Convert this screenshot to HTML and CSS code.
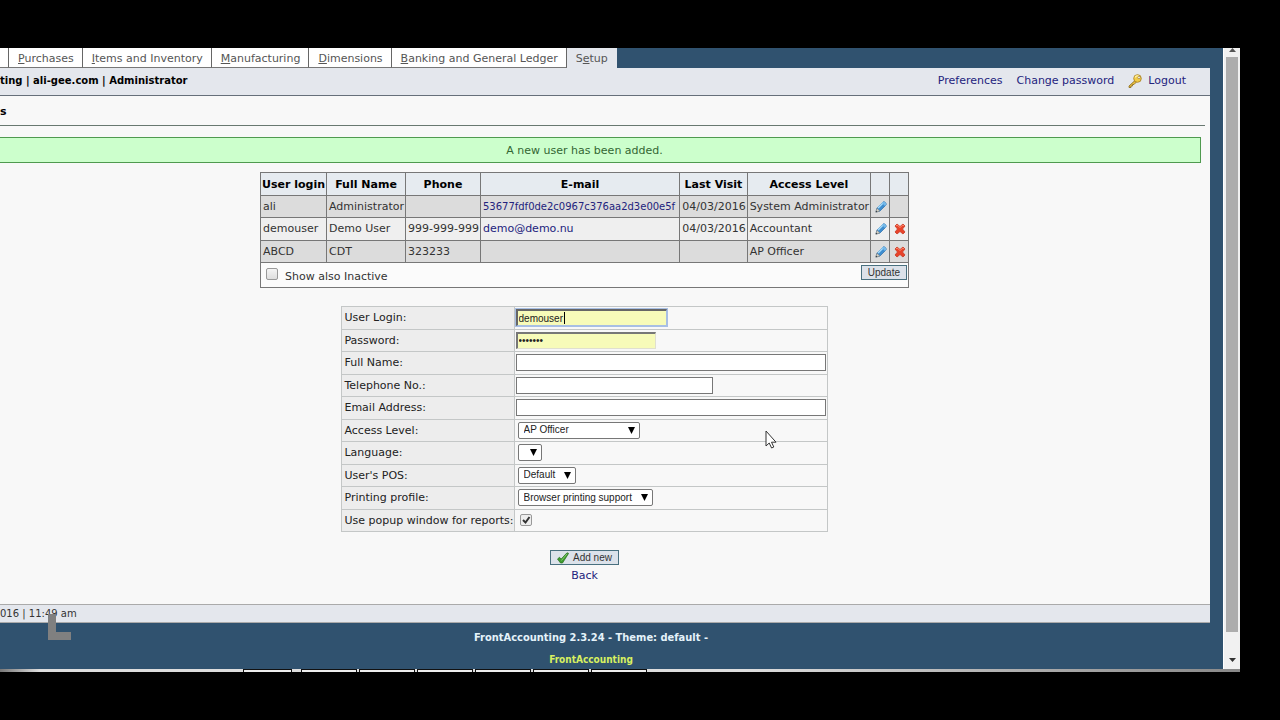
FILE: index.html
```
<!DOCTYPE html>
<html lang="en">
<head>
    <meta charset="UTF-8" />
    <meta name="viewport" content="width=device-width, initial-scale=1.0" />
    <title>FrontAccounting - Users</title>
    <link rel="stylesheet" href="styles.css">
</head>
<body>
    <!-- shared icons -->
    <svg class="defs" aria-hidden="true">
        <symbol id="pencil" viewBox="0 0 12 12">
            <path d="M1 11l1-4 6-6c1-1 4 1 3 3l-6 6z" fill="#3f8ed0" stroke="#2e6da8" stroke-width=".7"/>
            <path d="M3 7l5.500-5.500" stroke="#a9dcfa" stroke-width="1.600"/>
            <path d="M.8 11.200l1.100-4 2.900 2.800z" fill="#d9d3c4" stroke="#777" stroke-width=".5"/>
            <path d="M.7 11.300l.5-1.600 1.200 1.100z" fill="#333"/>
            <path d="M8 1c1-1 4 1 3 3l-1 1-3-3z" fill="#74b9ea"/>
        </symbol>
        <symbol id="cross" viewBox="0 0 12 12">
            <path d="M1 3l2-2 3 2.500L9 1l2 2-2.500 3L11 9l-2 2-3-2.500L3 11 1 9l2.500-3z" fill="#e8432a" stroke="#c83a25" stroke-width=".8" stroke-linejoin="round"/>
            <path d="M2 3l1-1 3 2.500L9 2l1 1" fill="none" stroke="#ff8a70" stroke-width=".9"/>
        </symbol>
    </svg>

    <div class="screen">
        <div class="page">
            <nav class="tabs">
                <span class="tab tab-cut"></span>
                <a class="tab" href="#"><u>P</u>urchases</a>
                <a class="tab" href="#"><u>I</u>tems and Inventory</a>
                <a class="tab" href="#"><u>M</u>anufacturing</a>
                <a class="tab" href="#"><u>D</u>imensions</a>
                <a class="tab" href="#"><u>B</u>anking and General Ledger</a>
                <a class="tab selected" href="#">S<u>e</u>tup</a>
            </nav>
            <div class="content">
                <header class="infobar">
                    <b>ting | ali-gee.com | Administrator</b>
                    <div class="links">
                        <a href="#">Preferences</a>
                        <a href="#">Change password</a>
                        <a class="logout" href="#">
                            <svg width="14" height="14" viewBox="0 0 14 14">
                                <path d="M7.500 6L1 12v1.500h2V12h1.500v-1.500H6L9 7.500z" fill="#e8bd3c" stroke="#86671c" stroke-width=".8"/>
                                <circle cx="9.500" cy="4.500" r="3.800" fill="#f2cc47" stroke="#a67c1e" stroke-width=".8"/>
                                <path d="M7 3.500c1-2 3-2 4-1" fill="none" stroke="#fff2a5" stroke-width="1.200"/>
                                <circle cx="11" cy="3.500" r="1.200" fill="#fff" stroke="#8a6b22" stroke-width=".6"/>
                            </svg>
                            Logout
                        </a>
                    </div>
                </header>
                <h1 class="title">s</h1>
                <div class="note">A new user has been added.</div>

                <table class="users">
                    <thead>
                        <tr>
                            <th>User login</th><th>Full Name</th><th>Phone</th><th class="email">E-mail</th>
                            <th>Last Visit</th><th>Access Level</th><th class="act"></th><th class="act"></th>
                        </tr>
                    </thead>
                    <tbody>
                        <tr class="odd">
                            <td>ali</td><td>Administrator</td><td></td>
                            <td><a class="hash" href="#">53677fdf0de2c0967c376aa2d3e00e5f</a></td>
                            <td>04/03/2016</td><td>System Administrator</td>
                            <td><button class="icon" title="Edit"><svg><use href="#pencil"/></svg></button></td>
                            <td></td>
                        </tr>
                        <tr class="even">
                            <td>demouser</td><td>Demo User</td><td>999-999-999</td>
                            <td><a href="#">demo@demo.nu</a></td>
                            <td>04/03/2016</td><td>Accountant</td>
                            <td><button class="icon" title="Edit"><svg><use href="#pencil"/></svg></button></td>
                            <td><button class="icon" title="Delete"><svg><use href="#cross"/></svg></button></td>
                        </tr>
                        <tr class="odd">
                            <td>ABCD</td><td>CDT</td><td>323233</td><td></td><td></td><td>AP Officer</td>
                            <td><button class="icon" title="Edit"><svg><use href="#pencil"/></svg></button></td>
                            <td><button class="icon" title="Delete"><svg><use href="#cross"/></svg></button></td>
                        </tr>
                    </tbody>
                    <tfoot>
                        <tr>
                            <td colspan="8">
                                <div class="controls">
                                    <label class="inactive"><input type="checkbox" class="check"> Show also Inactive</label>
                                    <button class="btn">Update</button>
                                </div>
                            </td>
                        </tr>
                    </tfoot>
                </table>

                <form>
                    <table class="fields">
                        <tr><td class="label"><label for="login">User Login:</label></td>
                            <td><input class="text filled focus" id="login" type="text" value="demouser"><span class="caret"></span></td></tr>
                        <tr><td class="label"><label for="pass">Password:</label></td>
                            <td><input class="text filled short" id="pass" type="password" value="1234567"></td></tr>
                        <tr><td class="label"><label for="name">Full Name:</label></td>
                            <td><input class="text wide" id="name" type="text"></td></tr>
                        <tr><td class="label"><label for="phone">Telephone No.:</label></td>
                            <td><input class="text medium" id="phone" type="text"></td></tr>
                        <tr><td class="label"><label for="email">Email Address:</label></td>
                            <td><input class="text wide" id="email" type="text"></td></tr>
                        <tr><td class="label"><label for="role">Access Level:</label></td>
                            <td><select class="combo role" id="role"><option>AP Officer</option></select></td></tr>
                        <tr><td class="label"><label for="lang">Language:</label></td>
                            <td><select class="combo lang" id="lang"><option></option></select></td></tr>
                        <tr><td class="label"><label for="pos">User's POS:</label></td>
                            <td><select class="combo" id="pos"><option>Default</option></select></td></tr>
                        <tr><td class="label"><label for="print">Printing profile:</label></td>
                            <td><select class="combo" id="print"><option>Browser printing support</option></select></td></tr>
                        <tr><td class="label"><label for="popup">Use popup window for reports:</label></td>
                            <td><input class="check" id="popup" type="checkbox" checked></td></tr>
                    </table>
                    <div class="actions">
                        <button class="btn add" type="button">
                            <svg width="12" height="12" viewBox="0 0 12 12">
                                <path d="M.5 7l2-1.700 1.700 1.700L10 .8l1.600.6L5.500 11H3.500z" fill="#3f9c2f" stroke="#236b1b" stroke-width=".7"/>
                                <path d="M4.500 8.500L10 1.800" stroke="#8fd77c" stroke-width=".8"/>
                            </svg>
                            Add new
                        </button>
                        <a href="#">Back</a>
                    </div>
                </form>
                <div class="status">016 | 11:49 am</div>
            </div>
            <footer class="footer">
                <span>FrontAccounting 2.3.24 - Theme: default -</span>
                <a href="#">FrontAccounting</a>
            </footer>
        </div>
        <div class="scrollbar">
            <svg width="7" height="4" viewBox="0 0 7 4"><path d="M0 4L3.500 0 7 4z" fill="#555"/></svg>
            <div class="thumb"></div>
            <svg width="7" height="4" viewBox="0 0 7 4"><path d="M0 0h7L3.500 4z" fill="#333"/></svg>
        </div>
        <div class="taskbar"><i></i><i></i><i></i><i></i><i></i><i></i><i></i></div>
    </div>

    <div class="corner"></div>
    <svg class="cursor" width="12" height="19" viewBox="0 0 12 19">
        <path d="M1 1v15l3.200-3 2.400 5 2.200-1-2.300-4.800H11z" fill="#fff" stroke="#333" stroke-width="1"/>
    </svg>
</body>
</html>
```
FILE: styles.css
```
* {
    box-sizing: border-box;
}

body {
    margin: 0;
    height: 100vh;
    padding: 48px 40px 48px 0;
    background: #000;
    overflow: hidden;
    font-family: "DejaVu Sans", Verdana, sans-serif;
    font-size: 11px;
    line-height: 14px;
    color: #333;
}

a {
    color: #23237d;
    text-decoration: none;
}

.defs {
    display: none;
}

.screen {
    height: 100%;
    display: grid;
    grid-template-columns: 1fr 17px;
    grid-template-rows: 1fr 3px;
    background: #30526f;
    overflow: hidden;
}

/* the window is scrolled a little to the right */
.page {
    margin-left: -41px;
    min-height: 0;
    display: flex;
    flex-direction: column;
}

.tabs {
    display: flex;
    height: 20px;
    padding-left: 41px;
    flex: none;
}

.tab {
    padding: 4px 8px 0 9px;
    background: #fff;
    color: #555;
    border-right: 1px solid #666;
    border-bottom: 1px solid #777;
    white-space: nowrap;
}

.tab-cut {
    width: 9px;
    padding: 0;
}

.tab.selected {
    background: #e4e7ed;
    border-color: #e4e7ed;
}

.content {
    flex: 1;
    margin-right: 13px;
    background: #f8f8f8;
    display: flex;
    flex-direction: column;
}

.infobar {
    display: flex;
    justify-content: space-between;
    align-items: center;
    height: 28px;
    padding: 0 24px 2px 41px;
    background: #e4e7ed;
    border-bottom: 1px solid #666f7a;
    color: #000;
}

.infobar b {
    font-size: 10px;
}

.links {
    display: flex;
    align-items: center;
    gap: 14px;
}

.logout {
    display: flex;
    gap: 6px;
}

.title {
    margin: 0 5px 0 0;
    height: 30px;
    padding: 9px 0 0 41px;
    font-size: 11px;
    line-height: 14px;
    color: #000;
    border-bottom: 1px solid #687870;
}

.note {
    margin: 11px 9px 9px;
    padding: 6px 0 4px;
    text-align: center;
    background: #ccffcc;
    border: 1px solid #4f9a4f;
    color: #336633;
}

table {
    border-collapse: collapse;
    margin: 0 auto;
}

.users {
    width: 649px;
    white-space: nowrap;
}

.users th,
.users td {
    height: 22px;
    padding: 0 1px 0 2px;
    border: 1px solid #777;
}

.users th {
    height: 23px;
    padding: 1px 1px 0;
    background: #e6ebf0;
    color: #000;
    text-align: center;
}

.users .email {
    width: 203px;
}

.users .hash {
    font-size: 10px;
}

.users .act {
    width: 20px;
}

.users .odd {
    background: #dcdcdc;
}

.users .even {
    background: #efefef;
}

.users tbody tr:nth-child(2) td {
    height: 23px;
}

.users tfoot td {
    height: 25px;
    background: #fbfbfb;
}

.icon {
    display: block;
    width: 14px;
    height: 14px;
    margin: 0 auto;
    padding: 1px;
    border: 0;
    background: none;
}

.icon svg {
    display: block;
    width: 12px;
    height: 12px;
}

.controls {
    display: flex;
    justify-content: space-between;
    align-items: flex-start;
}

.inactive {
    display: flex;
    align-items: flex-start;
    gap: 7px;
    padding: 3px 3px 0;
    line-height: 18px;
}

.btn {
    height: 15px;
    padding: 0 6px;
    border: 1px solid #49707f;
    background: #dce2ea;
    font: 10px/13px "Liberation Sans", Arial, sans-serif;
    color: #333;
}

.check {
    appearance: none;
    display: block;
    width: 12px;
    height: 12px;
    margin: 0;
    border: 1px solid #999;
    border-radius: 2px;
    background: linear-gradient(#f4f4f4, #dedede);
}

.fields .check {
    margin-left: 4px;
}

.check:checked {
    background: url("data:image/svg+xml,%3Csvg xmlns='http://www.w3.org/2000/svg' viewBox='0 0 10 10'%3E%3Cpath d='M2 5l2.500 2.500L8.500 2' fill='none' stroke='%23333' stroke-width='2'/%3E%3C/svg%3E") #eee;
}

.fields {
    width: 486px;
    height: 226px;
    margin-top: 18px;
}

.fields td {
    height: 22px;
    padding: 0 1px;
    border: 1px solid #c4c7c7;
    position: relative;
}

.fields .label {
    width: 171px;
    padding: 1px 0 0 2px;
    background: #ededed;
    white-space: nowrap;
    color: #222;
}

.text {
    display: block;
    height: 17px;
    width: 151px;
    padding: 0 2px;
    border: 1px solid #777;
    background: #fff;
    font: 10px/13px "Liberation Sans", Arial, sans-serif;
    color: #222;
    outline: 0;
}

.text.filled {
    padding: 0 1px;
    background: #f7fbb9;
    border: 1px solid #e0e0d0;
    border-top: 2px solid #777;
    border-left: 2px solid #777;
}

.text.focus {
    border-color: #666 #a8bfe4 #a8bfe4 #666;
    outline: 1px solid #a8bfe4;
}

.text.short {
    width: 140px;
}

.text.medium {
    width: 197px;
}

.text.wide {
    width: 310px;
}

/* text cursor after the typed name */
.caret {
    position: absolute;
    left: 49px;
    top: 5px;
    width: 1px;
    height: 12px;
    background: #000;
}

.combo {
    appearance: none;
    display: block;
    height: 17px;
    margin-left: 2px;
    padding: 0 19px 0 5px;
    border: 1px solid #777;
    border-radius: 2px;
    background: url("data:image/svg+xml,%3Csvg xmlns='http://www.w3.org/2000/svg' width='7' height='7'%3E%3Cpath d='M0 0h7L3.500 7z'/%3E%3C/svg%3E") no-repeat right 4px center #fff;
    font: 10px/14px "Liberation Sans", Arial, sans-serif;
    color: #222;
}

.combo.role {
    width: 122px;
}

.combo.lang {
    width: 24px;
    padding: 0;
}

.actions {
    display: flex;
    flex-direction: column;
    align-items: center;
    gap: 4px;
    margin-top: 18px;
}

.add {
    display: flex;
    align-items: center;
    gap: 4px;
}

.status {
    margin-top: auto;
    height: 19px;
    padding: 2px 0 0 41px;
    border-top: 1px solid #aaa;
    border-bottom: 1px solid #aaa;
    background: #e4e7ed;
    font-size: 10px;
}

.footer {
    flex: none;
    height: 46px;
    display: flex;
    flex-direction: column;
    align-items: center;
    gap: 8px;
    padding-top: 8px;
    font-family: "DejaVu Sans Condensed", "DejaVu Sans", sans-serif;
    font-weight: bold;
    font-size: 11px;
    color: #e4f2fa;
}

.footer a {
    font-size: 10px;
    color: #d8f060;
}

.scrollbar {
    display: flex;
    flex-direction: column;
    align-items: center;
    background: #f1f1f1;
    border-left: 1px solid #fff;
    padding-bottom: 7px;
}

.thumb {
    flex: 1;
    width: 12px;
    margin: 5px 0 26px;
    background: #adadad;
}

.taskbar {
    grid-column: 1 / -1;
    display: flex;
    gap: 2px;
    padding-left: 243px;
    background: linear-gradient(90deg, #777, #ddd 40px, #ddd 60%, #888);
}

.taskbar i {
    width: 56px;
    border: 1px solid #111;
    border-bottom: 0;
    background: #eee;
}

.taskbar i:first-child {
    width: 49px;
    margin-right: 7px;
}

/* mark left by the screen recorder */
.corner {
    position: absolute;
    left: 48px;
    top: 614px;
    width: 23px;
    height: 26px;
    border-left: 8px solid #808080;
    border-bottom: 8px solid #808080;
}

.cursor {
    position: absolute;
    left: 765px;
    top: 430px;
}
```
